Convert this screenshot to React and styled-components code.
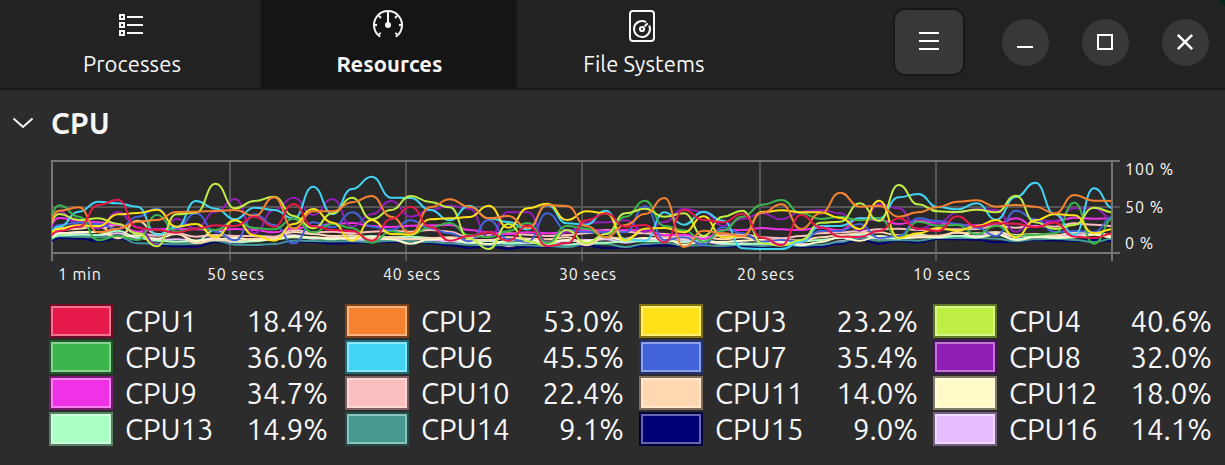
import React from "react";
import styled, { createGlobalStyle } from "styled-components";

const GlobalStyle = createGlobalStyle`
  * { box-sizing: border-box; }
  body { margin: 0; background: #06251b; font-family: Ubuntu, "Noto Sans", "Open Sans", sans-serif; color: #f7f7f7; }
`;

const Window = styled.main`
  width: 1225px;
  height: 465px;
  overflow: hidden;
  background: #2c2c2c;
  border-radius: 1px 10px 0 0;
`;

const HeaderBar = styled.header`
  display: flex;
  height: 90px;
  background: #222222;
  border-bottom: 2px solid #181818;
`;

const Tab = styled.button`
  width: ${(p) => p.$width}px;
  padding: 8px 0 0;
  border: 0;
  display: flex;
  flex-direction: column;
  align-items: center;
  gap: 7px;
  background: ${(p) => (p.$active ? "#151515" : "transparent")};
  color: #f7f7f7;
  font-family: inherit;
  font-size: 22px;
  line-height: 30px;
  font-weight: ${(p) => (p.$active ? 700 : 400)};
  svg { display: block; margin-right: ${(p) => p.$iconInset || 0}px; }
`;

const TabLabel = styled.span`
  padding-left: ${(p) => p.$indent || 0}px;
  padding-right: ${(p) => p.$outdent || 0}px;
  letter-spacing: 0.07px;
`;

const Controls = styled.div`
  display: flex;
  align-items: flex-start;
  margin-left: auto;
  padding: 8px 16.5px 0 0;
`;

const MenuButton = styled.button`
  width: 72px;
  height: 68px;
  margin-right: 36.5px;
  padding: 0;
  display: grid;
  place-items: center;
  border: 2px solid #181818;
  border-radius: 12px;
  background: #383838;
`;

const WindowButton = styled.button`
  width: 47px;
  height: 47px;
  margin: 10.5px 0 0 ${(p) => (p.$first ? 0 : 33)}px;
  padding: 0;
  display: grid;
  place-items: center;
  border: 0;
  border-radius: 50%;
  background: #383838;
`;

const SectionTitle = styled.h2`
  display: flex;
  align-items: center;
  gap: 17px;
  height: 60px;
  margin: 0;
  padding: 7px 0 0 12px;
  font-size: 29.33px;
  font-weight: 700;
  letter-spacing: 0.3px;
  svg { margin-top: -2px; }
`;

const ChartRow = styled.div`
  display: flex;
  height: 112px;
  padding-left: 40px;
`;

const Percentages = styled.div`
  display: flex;
  flex-direction: column;
  padding: 9px 0 0 5px;
  font-size: 16px;
  line-height: 20px;
  letter-spacing: 1px;
  white-space: nowrap;
  span:nth-child(2) { margin-top: 18px; }
  span:nth-child(3) { margin-top: 16px; }
`;

const TimeAxis = styled.div`
  display: flex;
  height: 42px;
  padding-left: 58px;
  font-size: 16px;
  line-height: 24px;
  letter-spacing: 0.85px;
`;

const Tick = styled.span`
  width: ${(p) => p.$width}px;
  white-space: nowrap;
`;

const Legend = styled.div`
  display: grid;
  grid-template-columns: 296px 294px 294px 278px;
  grid-auto-rows: 36px;
  padding-left: 49px;
`;

const LegendItem = styled.div`
  display: flex;
  align-items: flex-start;
  width: 279px;
  font-size: 29.33px;
  line-height: 36px;
`;

const Swatch = styled.span`
  width: 64px;
  height: 34px;
  margin-right: 12px;
  border: 2px solid color-mix(in srgb, ${(p) => p.$color} 50%, #000);
  background: ${(p) => p.$color};
  box-shadow: inset 0 0 0 2px rgba(255, 255, 255, 0.4);
`;

const CpuName = styled.span`
  letter-spacing: 0;
`;

const CpuLoad = styled.span`
  margin-left: auto;
`;

/* Levels are plot units: 33 is the 100% line and 309 is the 0% line. */
const cpus = [
  { color: "#e6194b", load: "18.4%", levels: [285,243,230,165,149,234,240,248,236,226,228,200,230,162,229,240,243,272,207,170,230,272,258,247,272,226,288,280,211,190,230,225,277,180,210,217,191,263,285,195,232,260,261,243,205,236,243,199,230,220,221,232,218,260,264,250] },
  { color: "#f58231", load: "53.0%", levels: [275,182,172,247,236,215,210,186,185,183,180,198,142,236,184,184,157,138,200,250,172,148,170,205,198,234,165,168,228,262,225,192,144,291,242,250,258,188,163,237,190,128,170,168,200,187,171,155,151,170,165,170,190,135,152,153] },
  { color: "#ffe119", load: "23.2%", levels: [275,236,226,229,193,189,179,230,222,262,210,256,272,222,177,218,272,210,252,254,208,205,201,167,233,175,161,210,184,190,271,236,234,247,199,262,258,186,181,187,187,204,237,152,264,250,234,242,228,210,262,211,192,196,250,237] },
  { color: "#bfef45", load: "40.6%", levels: [280,192,210,205,222,250,289,193,188,101,175,153,140,198,235,190,143,208,180,138,156,172,266,297,222,274,288,240,279,252,190,176,200,190,258,200,182,280,287,270,218,215,160,213,105,163,184,186,179,187,137,217,237,225,173,187] },
  { color: "#3cb44b", load: "36.0%", levels: [285,166,200,271,258,270,195,245,236,240,212,234,238,206,247,222,234,278,244,254,232,219,256,262,243,219,279,228,236,262,200,152,228,241,275,242,200,164,150,190,207,200,211,205,264,215,227,225,253,227,258,254,250,158,281,205] },
  { color: "#42d4f4", load: "45.5%", levels: [285,230,185,155,160,170,254,232,153,176,208,173,180,206,110,192,117,80,143,144,180,211,167,205,216,238,165,220,224,182,268,272,187,224,185,212,295,297,297,275,228,228,205,205,142,132,171,178,160,209,141,98,193,255,115,175] },
  { color: "#4363d8", load: "35.4%", levels: [285,225,218,222,238,200,176,235,190,245,271,193,225,280,217,232,187,230,240,211,235,250,274,210,268,275,190,240,246,247,247,169,270,262,283,232,250,275,270,275,243,243,222,264,258,205,213,222,233,258,182,208,246,243,246,200] },
  { color: "#911eb4", load: "32.0%", levels: [275,184,225,235,186,230,285,207,235,185,147,250,180,143,195,147,230,193,153,200,180,167,176,262,186,187,277,247,218,217,211,245,216,176,186,228,207,190,208,185,180,190,242,162,175,238,220,187,177,180,245,212,213,175,174,210] },
  { color: "#f032e6", load: "34.7%", levels: [280,204,212,217,225,245,238,236,238,240,237,240,247,235,230,222,219,228,231,227,226,225,240,247,252,247,250,246,240,242,240,242,255,254,267,240,240,234,238,240,233,241,205,210,222,212,220,225,226,222,205,230,213,203,206,205] },
  { color: "#fabebe", load: "22.4%", levels: [285,235,225,235,225,250,257,250,260,255,258,258,260,240,247,245,250,245,243,245,240,245,262,256,250,254,258,255,250,240,245,250,262,258,262,256,252,262,265,258,250,247,243,238,236,240,238,238,237,227,233,228,230,220,224,228] },
  { color: "#ffd8b1", load: "14.0%", levels: [285,240,236,226,265,212,252,250,279,270,272,266,264,246,252,258,256,266,262,268,264,262,270,270,262,266,268,262,286,262,266,244,252,266,262,268,262,274,268,272,262,255,250,247,256,257,257,248,250,246,255,252,256,248,246,258] },
  { color: "#fffac8", load: "18.0%", levels: [285,250,246,246,262,256,266,252,272,268,264,270,268,258,262,266,264,262,268,281,268,266,276,282,272,270,276,270,274,262,270,264,266,284,274,276,272,270,276,286,276,262,272,258,264,262,262,246,262,252,270,262,262,262,254,262] },
  { color: "#aaffc3", load: "14.9%", levels: [285,256,254,255,242,262,272,275,274,240,276,274,268,262,264,268,262,258,262,260,264,268,278,272,280,276,282,284,278,278,274,274,272,276,270,280,282,280,272,274,270,264,252,264,266,254,262,258,262,254,268,258,264,262,252,262] },
  { color: "#469990", load: "9.1%", levels: [285,259,260,262,260,280,281,283,281,272,284,285,282,272,273,274,274,276,272,274,276,280,284,286,284,286,288,291,282,282,291,282,278,287,286,288,284,288,284,288,284,276,264,272,270,272,264,264,264,266,274,268,266,270,276,266] },
  { color: "#000075", load: "9.0%", levels: [290,264,266,273,265,278,284,289,290,276,283,286,282,275,276,281,279,276,276,275,279,286,293,289,296,290,290,289,287,294,293,287,287,288,288,290,289,290,288,290,290,281,269,281,272,277,267,268,269,277,275,270,271,273,270,273] },
  { color: "#e6beff", load: "14.1%", levels: [285,249,251,256,250,264,270,268,272,263,280,270,264,256,266,262,270,270,268,266,270,274,280,272,288,278,280,273,270,268,278,270,266,270,275,282,280,284,278,281,289,274,256,266,264,262,260,258,258,252,260,256,258,256,246,258] },
];

const STEP = 58.56;

function curve(levels) {
  return levels.reduce((path, level, i) => {
    const x = i * STEP - 0.6;
    if (i === 0) return `M${x} ${level}`;
    const mid = x - STEP / 2;
    return `${path} C${mid} ${levels[i - 1]} ${mid} ${level} ${x} ${level}`;
  }, "");
}

function CpuChart() {
  return (
    <svg width="1080" height="112" viewBox="0 0 3240 336">
      <defs>
        <clipPath id="plot">
          <rect x="36" y="33" width="3177" height="276" />
        </clipPath>
      </defs>
      <rect x="36" y="33" width="3180" height="276" fill="#292929" />
      <g fill="none" stroke="#565656" strokeWidth="6">
        <path d="M36 171H3240" />
        {[570, 1098, 1626, 2160, 2688].map((x) => (
          <path key={x} d={`M${x} 33V333`} />
        ))}
      </g>
      <path d="M36 30V333M3216 30V333M33 33H3240M33 309H3240" fill="none" stroke="#757575" strokeWidth="6" />
      <g clipPath="url(#plot)" fill="none" strokeWidth="6">
        {[...cpus].reverse().map((cpu) => (
          <path key={cpu.color} d={curve(cpu.levels)} stroke={cpu.color} />
        ))}
      </g>
    </svg>
  );
}

const ListIcon = () => (
  <svg width="32" height="34" viewBox="0 0 32 34" fill="none" stroke="#f7f7f7" strokeWidth="2">
    <path d="M4 7h4v4H4zM4 15h4v4H4zM4 23h4v4H4zM11 9h16M11 17h16M11 25h16" />
  </svg>
);

const GaugeIcon = () => (
  <svg width="32" height="34" viewBox="0 0 32 34" fill="none" stroke="#f7f7f7" strokeWidth="2">
    <path d="M8.2 28.7A14 14 0 1 1 23.8 28.7M16 4v12M2 17h3M27 17h3M7 8l2 2M25 8l-2 2M7 26l1.8-1M25 26l-1.8-1" />
    <circle cx="16" cy="17" r="3" fill="#f7f7f7" stroke="none" />
  </svg>
);

const DiskIcon = () => (
  <svg width="32" height="34" viewBox="0 0 32 34" fill="none" stroke="#f7f7f7" strokeWidth="2">
    <rect x="4" y="3" width="24" height="30" rx="3" />
    <path d="M20 14.1A8 8 0 1 0 23.2 17.5M18.5 18.5l3.2-3.2" />
    <circle cx="16" cy="21" r="2.1" />
  </svg>
);

const Glyph = ({ d, width = 2 }) => (
  <svg width="24" height="24" viewBox="0 0 24 24" fill="none" stroke="#fff" strokeWidth={width}>
    <path d={d} />
  </svg>
);

export default function App() {
  return (
    <>
      <GlobalStyle />
      <Window>
        <HeaderBar>
          <Tab $width={261} $iconInset={-3}><ListIcon /><TabLabel $indent={3}>Processes</TabLabel></Tab>
          <Tab $width={256} $iconInset={2} $active><GaugeIcon /><TabLabel $indent={1}>Resources</TabLabel></Tab>
          <Tab $width={256} $iconInset={6}><DiskIcon /><TabLabel $outdent={2}>File Systems</TabLabel></Tab>
          <Controls>
            <MenuButton aria-label="Menu"><Glyph d="M2 3h20M2 11h20M2 19h20" /></MenuButton>
            <WindowButton $first aria-label="Minimize"><Glyph d="M4 17h16" /></WindowButton>
            <WindowButton aria-label="Maximize"><Glyph d="M5 5h14v14H5z" /></WindowButton>
            <WindowButton aria-label="Close"><Glyph d="M4.8 4.8l14.4 14.4M19.2 4.8L4.8 19.2" width={2.5} /></WindowButton>
          </Controls>
        </HeaderBar>
        <SectionTitle>
          <svg width="22" height="14" viewBox="0 0 22 14" fill="none" stroke="#f7f7f7" strokeWidth="2">
            <path d="M1.5 2.5L11 11l9.5-8.5" />
          </svg>
          CPU
        </SectionTitle>
        <ChartRow>
          <CpuChart />
          <Percentages><span>100 %</span><span>50 %</span><span>0 %</span></Percentages>
        </ChartRow>
        <TimeAxis>
          <Tick $width={149}>1 min</Tick>
          <Tick $width={176}>50 secs</Tick>
          <Tick $width={176}>40 secs</Tick>
          <Tick $width={178}>30 secs</Tick>
          <Tick $width={176}>20 secs</Tick>
          <Tick $width={80}>10 secs</Tick>
        </TimeAxis>
        <Legend>
          {cpus.map((cpu, i) => (
            <LegendItem key={cpu.color}>
              <Swatch $color={cpu.color} />
              <CpuName>CPU{i + 1}</CpuName>
              <CpuLoad>{cpu.load}</CpuLoad>
            </LegendItem>
          ))}
        </Legend>
      </Window>
    </>
  );
}
